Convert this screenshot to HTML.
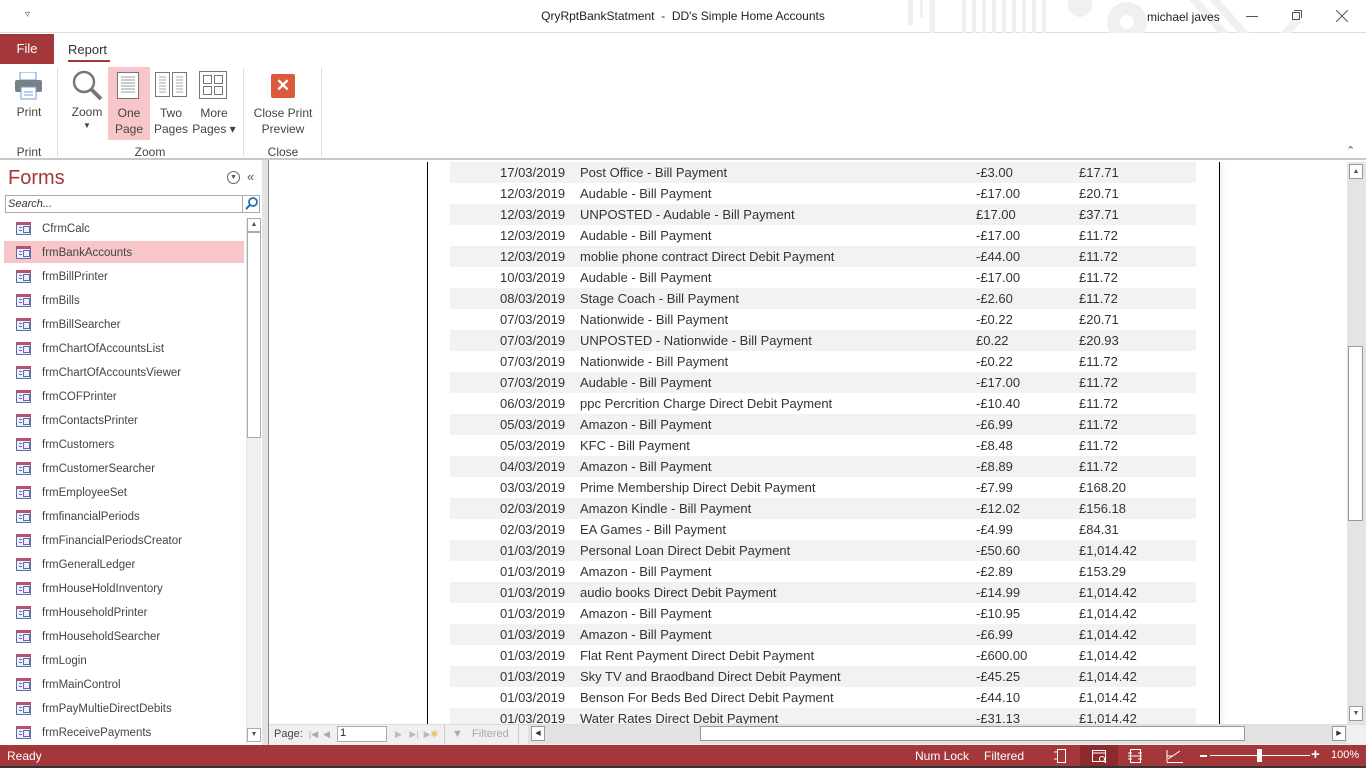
<!DOCTYPE html>
<html><head><meta charset="utf-8"><style>
*{margin:0;padding:0;box-sizing:border-box}
body{width:1366px;height:768px;overflow:hidden;background:#fff;font-family:"Liberation Sans",sans-serif;font-size:12px;color:#444;position:relative}
.a{position:absolute}
.t{white-space:nowrap}
.nav div.it{position:absolute;left:4px;width:240px;height:22px}
.nav .ic{position:absolute;left:12px;top:4px;width:15px;height:13px;border:1px solid #5a6fa8;border-top:3px solid #c0506a;background:#eef}
.nav .ic:before{content:"";position:absolute;left:2px;top:2px;width:3px;height:1px;background:#5a6fa8;box-shadow:0 3px 0 #5a6fa8}
.nav .ic:after{content:"";position:absolute;left:6px;top:1px;width:5px;height:5px;border:1px solid #5a6fa8}
.nav .lb{position:absolute;left:38px;top:5px;font-size:11.5px;color:#444}
.row{position:absolute;left:450px;width:746px;height:21px;font-size:13px;color:#333}
.row.s{background:#f2f2f2}
.row span{position:absolute;top:3px;white-space:nowrap}
.rb{font-size:12px;color:#444;text-align:center;position:absolute}
</style></head><body>
<div class="a" style="left:0;top:0;width:1366px;height:33px;background:#fff;border-bottom:1px solid #dedede"></div>
<svg class="a" style="left:900px;top:0" width="400" height="33"><g fill="#f0f0f0"><rect x="8" y="0" width="5" height="25"/><rect x="20" y="0" width="3" height="18"/><rect x="30" y="0" width="5" height="33"/><rect x="62" y="0" width="4" height="33"/><rect x="72" y="0" width="4" height="33"/><rect x="82" y="0" width="4" height="33"/><rect x="92" y="0" width="4" height="33"/><rect x="102" y="0" width="4" height="33"/><rect x="112" y="0" width="4" height="33"/><rect x="122" y="0" width="4" height="33"/><rect x="132" y="0" width="4" height="33"/><rect x="142" y="0" width="4" height="33"/><circle cx="180" cy="5" r="12"/><circle cx="227" cy="22" r="20"/></g><circle cx="227" cy="22" r="7" fill="#fff"/><g stroke="#f0f0f0" stroke-width="8"><line x1="290" y1="-5" x2="330" y2="40"/><line x1="310" y1="-5" x2="350" y2="40"/><line x1="380" y1="40" x2="420" y2="-5"/></g></svg>
<div class="a t" style="left:25px;top:9px;font-size:10px;color:#555">&#9663;</div>
<div class="a t" style="left:0;width:1366px;top:9px;text-align:center;font-size:12px;color:#222">QryRptBankStatment&nbsp; - &nbsp;DD's Simple Home Accounts</div>
<div class="a t" style="left:1147px;top:10px;font-size:12px;color:#222">michael javes</div>
<div class="a" style="left:1246px;top:16px;width:12px;height:1px;background:#555"></div>
<div class="a" style="left:1292px;top:12px;width:8px;height:8px;border:1px solid #555"></div>
<div class="a" style="left:1294px;top:10px;width:8px;height:8px;border-top:1px solid #555;border-right:1px solid #555"></div>
<svg class="a" style="left:1336px;top:10px" width="12" height="12"><path d="M0 0L12 12M12 0L0 12" stroke="#555"/></svg>
<div class="a" style="left:0;top:34px;width:54px;height:30px;background:#a4373a;color:#fff;font-size:13px;text-align:center;line-height:30px">File</div>
<div class="a t" style="left:68px;top:42px;font-size:13px;color:#333">Report</div>
<div class="a" style="left:68px;top:60px;width:42px;height:2px;background:#a4373a"></div>
<div class="a" style="left:0;top:158px;width:1366px;height:2px;background:#c8c8c8"></div>
<svg class="a" style="left:14px;top:72px" width="30" height="28"><rect x="6" y="0" width="16" height="8" fill="#fff" stroke="#6a9ed8"/><rect x="1" y="8" width="27" height="12" rx="2" fill="#7a8088"/><rect x="7" y="15" width="15" height="12" fill="#fff" stroke="#6a9ed8"/><line x1="10" y1="20" x2="19" y2="20" stroke="#6a9ed8"/><line x1="10" y1="23" x2="19" y2="23" stroke="#6a9ed8"/></svg>
<div class="rb" style="left:10px;top:105px;width:38px">Print</div>
<div class="rb" style="left:10px;top:145px;width:38px">Print</div>
<div class="a" style="left:57px;top:68px;width:1px;height:88px;background:#ddd"></div>
<svg class="a" style="left:72px;top:70px" width="32" height="32"><circle cx="12" cy="12" r="10" fill="none" stroke="#777" stroke-width="2.5"/><line x1="19" y1="19" x2="29" y2="29" stroke="#777" stroke-width="4"/></svg>
<div class="rb" style="left:66px;top:105px;width:42px">Zoom</div>
<div class="rb" style="left:66px;top:121px;width:42px;font-size:8px">&#9660;</div>
<div class="a" style="left:108px;top:67px;width:42px;height:73px;background:#f8c6c8"></div>
<svg class="a" style="left:117px;top:72px" width="24" height="28"><rect x="0.5" y="0.5" width="21" height="26" fill="#fff" stroke="#777"/><g stroke="#999"><line x1="4" y1="5" x2="18" y2="5"/><line x1="4" y1="8" x2="18" y2="8"/><line x1="4" y1="11" x2="18" y2="11"/><line x1="4" y1="14" x2="18" y2="14"/><line x1="4" y1="17" x2="18" y2="17"/><line x1="4" y1="20" x2="18" y2="20"/></g></svg>
<div class="rb" style="left:108px;top:105px;width:42px;line-height:16px">One<br>Page</div>
<svg class="a" style="left:155px;top:72px" width="34" height="28"><rect x="0.5" y="0.5" width="14" height="24" fill="#fff" stroke="#777"/><rect x="17.5" y="0.5" width="14" height="24" fill="#fff" stroke="#777"/><g stroke="#aaa"><path d="M4 5h7M4 8h7M4 11h7M4 14h7M4 17h7M4 20h7M21 5h7M21 8h7M21 11h7M21 14h7M21 17h7M21 20h7"/></g></svg>
<div class="rb" style="left:150px;top:105px;width:42px;line-height:16px">Two<br>Pages</div>
<svg class="a" style="left:199px;top:71px" width="30" height="28"><rect x="0.5" y="0.5" width="27" height="27" fill="#fff" stroke="#777"/><g fill="none" stroke="#777"><rect x="4.5" y="4.5" width="8" height="8"/><rect x="15.5" y="4.5" width="8" height="8"/><rect x="4.5" y="15.5" width="8" height="8"/><rect x="15.5" y="15.5" width="8" height="8"/></g></svg>
<div class="rb" style="left:192px;top:105px;width:44px;line-height:16px">More<br>Pages &#9662;</div>
<div class="rb" style="left:108px;top:145px;width:84px">Zoom</div>
<div class="a" style="left:243px;top:68px;width:1px;height:88px;background:#ddd"></div>
<div class="a" style="left:271px;top:74px;width:24px;height:24px;background:#dc5a3c;border-radius:2px;color:#fff;font-weight:bold;font-size:17px;text-align:center;line-height:24px">&#x2715;</div>
<div class="rb" style="left:248px;top:105px;width:70px;line-height:16px">Close Print<br>Preview</div>
<div class="rb" style="left:248px;top:145px;width:70px">Close</div>
<div class="a" style="left:321px;top:68px;width:1px;height:88px;background:#ddd"></div>
<div class="a t" style="left:1346px;top:144px;font-size:11px;color:#555">&#8963;</div>
<div class="nav">
<div class="a t" style="left:8px;top:167px;font-size:20px;color:#a4373a">Forms</div>
<div class="a" style="left:227px;top:171px;width:13px;height:13px;border:1px solid #666;border-radius:50%;font-size:7px;text-align:center;line-height:11px;color:#555">&#9660;</div>
<div class="a t" style="left:247px;top:169px;font-size:13px;color:#555">&laquo;</div>
<div class="a" style="left:5px;top:195px;width:255px;height:18px;border:1px solid #ababab"></div>
<div class="a t" style="left:8px;top:198px;font-size:11px;font-style:italic;color:#333">Search...</div>
<div class="a" style="left:242px;top:195px;width:1px;height:18px;background:#ababab"></div>
<svg class="a" style="left:244px;top:196px" width="15" height="15"><circle cx="9" cy="6" r="4" fill="none" stroke="#2a6ab8" stroke-width="1.8"/><line x1="6" y1="9" x2="2" y2="13" stroke="#2a6ab8" stroke-width="2"/></svg>
<div class="a" style="left:246px;top:218px;width:16px;height:526px;background:#fff;border-left:1px solid #e6e6e6"></div>
<div class="a" style="left:247px;top:218px;width:14px;height:14px;border:1px solid #aaa;font-size:7px;text-align:center;color:#555;line-height:12px">&#9650;</div>
<div class="a" style="left:247px;top:232px;width:14px;height:206px;border:1px solid #aaa"></div>
<div class="a" style="left:247px;top:438px;width:14px;height:290px;background:#f0f0f0"></div>
<div class="a" style="left:247px;top:728px;width:14px;height:14px;border:1px solid #aaa;font-size:7px;text-align:center;color:#555;line-height:12px">&#9660;</div>
<div class="it" style="top:241px;background:#f8c6c8"></div>
<div id="items"></div>
</div>
<div class="a" style="left:262px;top:160px;width:7px;height:585px;background:#e3e3e3;border-right:1px solid #888"></div>
<div class="a" style="left:427px;top:162px;width:1px;height:562px;background:#000"></div>
<div class="a" style="left:1219px;top:162px;width:1px;height:562px;background:#000;box-shadow:2px 0 4px #ccc"></div>
<div id="rows"></div>
<div class="a" style="left:1347px;top:162px;width:19px;height:562px;background:#e4e4e4"></div>
<div class="a" style="left:1349px;top:164px;width:14px;height:15px;border:1px solid #999;background:#fff;font-size:7px;text-align:center;color:#555;line-height:13px">&#9650;</div>
<div class="a" style="left:1348px;top:346px;width:15px;height:175px;border:1px solid #999;background:#fff"></div>
<div class="a" style="left:1349px;top:706px;width:14px;height:15px;border:1px solid #999;background:#fff;font-size:7px;text-align:center;color:#555;line-height:13px">&#9660;</div>
<div class="a" style="left:269px;top:724px;width:1097px;height:21px;background:#f0f0f0;border-top:1px solid #ddd"></div>
<div class="a t" style="left:274px;top:728px;font-size:11px;color:#444">Page:&nbsp; <span style="color:#aaa;font-size:9px">|&#9664;&nbsp; &#9664;</span></div>
<div class="a" style="left:337px;top:726px;width:50px;height:16px;border:1px solid #aaa;background:#fff;font-size:11px;color:#224;padding-left:2px">1</div>
<div class="a t" style="left:395px;top:729px;font-size:9px;color:#bbb">&#9654;&nbsp;&nbsp; &#9654;|&nbsp; &#9654;<span style="color:#e8c060">&#10033;</span></div>
<div class="a" style="left:444px;top:725px;width:1px;height:19px;background:#ccc"></div>
<div class="a t" style="left:452px;top:728px;font-size:11px;color:#aaa">&#9660;&nbsp;&nbsp; Filtered</div>
<div class="a" style="left:518px;top:725px;width:1px;height:19px;background:#ccc"></div>
<div class="a" style="left:528px;top:725px;width:819px;height:19px;background:#e2e2e2"></div>
<div class="a" style="left:531px;top:726px;width:14px;height:15px;border:1px solid #999;background:#fff;font-size:7px;text-align:center;line-height:13px;color:#333">&#9664;</div>
<div class="a" style="left:700px;top:726px;width:545px;height:15px;border:1px solid #999;background:#fff"></div>
<div class="a" style="left:1332px;top:726px;width:14px;height:15px;border:1px solid #999;background:#fff;font-size:7px;text-align:center;line-height:13px;color:#333">&#9654;</div>
<div class="a" style="left:0;top:745px;width:1366px;height:23px;background:#a4373a;border-bottom:2px solid #333"></div>
<div class="a t" style="left:7px;top:749px;color:#fff;font-size:12px">Ready</div>
<div class="a t" style="left:915px;top:749px;color:#fff;font-size:12px">Num Lock</div>
<div class="a t" style="left:984px;top:749px;color:#fff;font-size:12px">Filtered</div>
<div class="a" style="left:1080px;top:745px;width:38px;height:21px;background:#8c2a2d"></div>
<svg class="a" style="left:1050px;top:747px" width="300" height="18" fill="none" stroke="#fff"><path d="M7.5 2.5h8v13h-8zM4 5h4M4 12h4"/><path d="M42.5 3.5h13v11h-13zM42 6h14"/><circle cx="52" cy="12" r="2.5"/><path d="M54 14l2 2"/><path d="M80.5 2.5h10v13h-10zM78 6h4M78 9h14M78 12h4M88 6h4M88 12h4"/><path d="M117 15.5h16M117 15V3M118 12l12-8M117 9h6"/></svg>
<div class="a" style="left:1200px;top:755px;width:7px;height:2px;background:#fff"></div>
<div class="a" style="left:1210px;top:755px;width:100px;height:1px;background:#fff"></div>
<div class="a" style="left:1257px;top:749px;width:5px;height:13px;background:#fff"></div>
<div class="a t" style="left:1311px;top:746px;color:#fff;font-size:15px;font-weight:bold">+</div>
<div class="a t" style="left:1331px;top:749px;color:#fff;font-size:11px">100%</div>
<script>
var it=["CfrmCalc","frmBankAccounts","frmBillPrinter","frmBills","frmBillSearcher","frmChartOfAccountsList","frmChartOfAccountsViewer","frmCOFPrinter","frmContactsPrinter","frmCustomers","frmCustomerSearcher","frmEmployeeSet","frmfinancialPeriods","frmFinancialPeriodsCreator","frmGeneralLedger","frmHouseHoldInventory","frmHouseholdPrinter","frmHouseholdSearcher","frmLogin","frmMainControl","frmPayMultieDirectDebits","frmReceivePayments"];
var h="";it.forEach(function(n,i){h+='<div class="it" style="top:'+(218+i*24)+'px"><div class="ic"></div><div class="lb">'+n+'</div></div>'});
document.getElementById("items").innerHTML=h;
var r=[["17/03/2019","Post Office - Bill Payment","-£3.00","£17.71"],["12/03/2019","Audable - Bill Payment","-£17.00","£20.71"],["12/03/2019","UNPOSTED - Audable - Bill Payment","£17.00","£37.71"],["12/03/2019","Audable - Bill Payment","-£17.00","£11.72"],["12/03/2019","moblie phone contract Direct Debit Payment","-£44.00","£11.72"],["10/03/2019","Audable - Bill Payment","-£17.00","£11.72"],["08/03/2019","Stage Coach - Bill Payment","-£2.60","£11.72"],["07/03/2019","Nationwide - Bill Payment","-£0.22","£20.71"],["07/03/2019","UNPOSTED - Nationwide - Bill Payment","£0.22","£20.93"],["07/03/2019","Nationwide - Bill Payment","-£0.22","£11.72"],["07/03/2019","Audable - Bill Payment","-£17.00","£11.72"],["06/03/2019","ppc Percrition Charge Direct Debit Payment","-£10.40","£11.72"],["05/03/2019","Amazon - Bill Payment","-£6.99","£11.72"],["05/03/2019","KFC - Bill Payment","-£8.48","£11.72"],["04/03/2019","Amazon - Bill Payment","-£8.89","£11.72"],["03/03/2019","Prime Membership Direct Debit Payment","-£7.99","£168.20"],["02/03/2019","Amazon Kindle - Bill Payment","-£12.02","£156.18"],["02/03/2019","EA Games - Bill Payment","-£4.99","£84.31"],["01/03/2019","Personal Loan Direct Debit Payment","-£50.60","£1,014.42"],["01/03/2019","Amazon - Bill Payment","-£2.89","£153.29"],["01/03/2019","audio books Direct Debit Payment","-£14.99","£1,014.42"],["01/03/2019","Amazon - Bill Payment","-£10.95","£1,014.42"],["01/03/2019","Amazon - Bill Payment","-£6.99","£1,014.42"],["01/03/2019","Flat Rent Payment Direct Debit Payment","-£600.00","£1,014.42"],["01/03/2019","Sky TV and Braodband Direct Debit Payment","-£45.25","£1,014.42"],["01/03/2019","Benson For Beds Bed Direct Debit Payment","-£44.10","£1,014.42"],["01/03/2019","Water Rates Direct Debit Payment","-£31.13","£1,014.42"]];
h="";r.forEach(function(x,i){var top=162+i*21;var hh=Math.min(21,724-top);h+='<div class="row'+(i%2==0?' s':'')+'" style="top:'+top+'px;height:'+hh+'px;overflow:hidden"><span style="left:50px">'+x[0]+'</span><span style="left:130px">'+x[1]+'</span><span style="left:526px">'+x[2]+'</span><span style="left:629px">'+x[3]+'</span></div>'});
document.getElementById("rows").innerHTML=h;
</script>
</body></html>
